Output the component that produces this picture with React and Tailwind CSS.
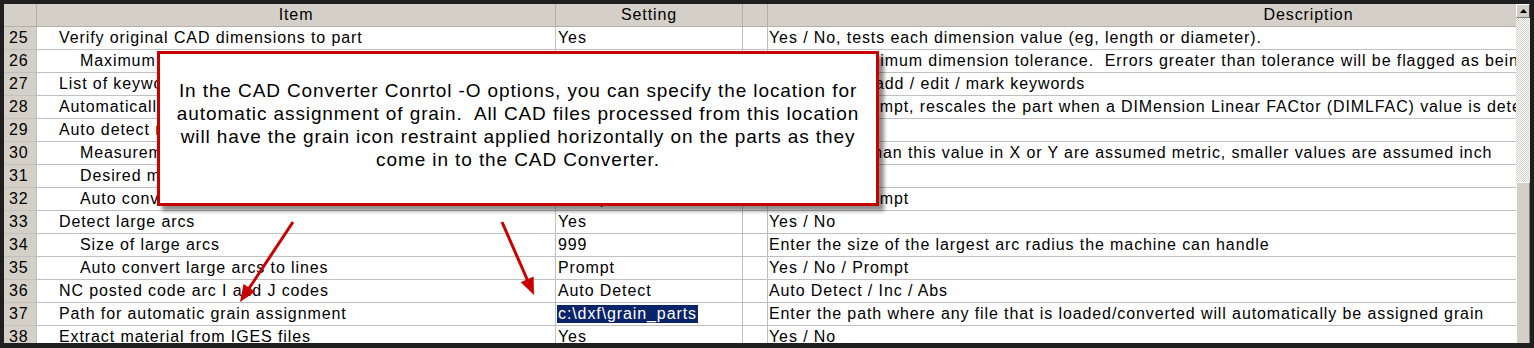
import React from "react";

const rows = [
  { n: 25, lvl: 1, item: "Verify original CAD dimensions to part", set: "Yes", desc: "Yes / No, tests each dimension value (eg, length or diameter)." },
  { n: 26, lvl: 2, item: "Maximum dimension tolerance", set: "0.001", desc: "Enter the maximum dimension tolerance.  Errors greater than tolerance will be flagged as being incorrect" },
  { n: 27, lvl: 1, item: "List of keywords", set: "", desc: "Click here to add / edit / mark keywords" },
  { n: 28, lvl: 1, item: "Automatically scale by DIMLFAC", set: "Prompt", desc: "Yes / No / Prompt, rescales the part when a DIMension Linear FACtor (DIMLFAC) value is detected" },
  { n: 29, lvl: 1, item: "Auto detect metric units", set: "Yes", desc: "Yes / No" },
  { n: 30, lvl: 2, item: "Measurement threshold", set: "100", desc: "Parts larger than this value in X or Y are assumed metric, smaller values are assumed inch" },
  { n: 31, lvl: 2, item: "Desired measurement units", set: "Inch", desc: "Inch / Metric" },
  { n: 32, lvl: 2, item: "Auto convert to desired units", set: "Prompt", desc: "Yes / No / Prompt" },
  { n: 33, lvl: 1, item: "Detect large arcs", set: "Yes", desc: "Yes / No" },
  { n: 34, lvl: 2, item: "Size of large arcs", set: "999", desc: "Enter the size of the largest arc radius the machine can handle" },
  { n: 35, lvl: 2, item: "Auto convert large arcs to lines", set: "Prompt", desc: "Yes / No / Prompt" },
  { n: 36, lvl: 1, item: "NC posted code arc I and J codes", set: "Auto Detect", desc: "Auto Detect / Inc / Abs" },
  { n: 37, lvl: 1, item: "Path for automatic grain assignment", set: "c:\\dxf\\grain_parts", desc: "Enter the path where any file that is loaded/converted will automatically be assigned grain", selected: true },
  { n: 38, lvl: 1, item: "Extract material from IGES files", set: "Yes", desc: "Yes / No" },
];

const cell = "h-[23px] border-r border-b border-[#c0c0c0] flex items-center whitespace-pre overflow-hidden";
const head = "h-[23px] border-r border-b border-[#b4b0a8] bg-[#d4d0c8] flex items-center justify-center whitespace-pre";

function arrowHead(x1, y1, x2, y2, len = 17, half = 7) {
  const dx = x2 - x1;
  const dy = y2 - y1;
  const d = Math.hypot(dx, dy);
  const ux = dx / d;
  const uy = dy / d;
  const bx = x2 - ux * len;
  const by = y2 - uy * len;
  return `${x2},${y2} ${bx - uy * half},${by + ux * half} ${bx + uy * half},${by - ux * half}`;
}

function Arrow({ x1, y1, x2, y2 }) {
  const d = Math.hypot(x2 - x1, y2 - y1);
  const ex = x2 - ((x2 - x1) / d) * 12;
  const ey = y2 - ((y2 - y1) / d) * 12;
  return (
    <g>
      <line x1={x1} y1={y1} x2={ex} y2={ey} stroke="#c80000" strokeWidth="3" />
      <polygon points={arrowHead(x1, y1, x2, y2)} fill="#c80000" />
    </g>
  );
}

export default function App() {
  return (
    <div className="relative w-[1534px] h-[348px] bg-[#1f1f1f] pt-[4px] pl-[4px] pr-[4px] pb-[5px] flex overflow-hidden font-['Liberation_Sans',Arial,sans-serif] text-[16px] tracking-[0.9px] text-black">
      <div className="flex-1 bg-white overflow-hidden">
        <div className="grid grid-cols-[33px_519px_187px_25px_1082px] w-max">
          <div className={head}></div>
          <div className={head}>Item</div>
          <div className={head}>Setting</div>
          <div className={head}></div>
          <div className={head}>Description</div>

          {rows.map((r) => (
            <React.Fragment key={r.n}>
              <div className={`${cell} bg-[#d4d0c8] pl-[5px]`}>{r.n}</div>
              <div className={`${cell} ${r.lvl === 1 ? "pl-[22px]" : "pl-[43px]"}`}>{r.item}</div>
              <div className={`${cell} pl-[1px]`}>
                {r.selected ? (
                  <span className="bg-[#0a246a] text-white px-[1px] leading-[18px]">{r.set}</span>
                ) : (
                  <span className="px-[1px]">{r.set}</span>
                )}
              </div>
              <div className={cell}></div>
              <div className={`${cell} pl-[1px]`}>{r.desc}</div>
            </React.Fragment>
          ))}
        </div>
      </div>

      {/* scrollbar */}
      <div className="w-[14px] flex flex-col">
        <div className="h-[14px] bg-[#d4d0c8] border-t border-l border-t-white border-l-white border-b border-r border-b-[#808080] border-r-[#404040] flex items-center justify-center">
          <svg width="7" height="4" viewBox="0 0 7 4">
            <polygon points="3.5,0 7,4 0,4" fill="#000" />
          </svg>
        </div>
        <div className="h-[164px] bg-[repeating-conic-gradient(#ffffff_0_25%,#d4d0c8_0_50%)] bg-[length:2px_2px]"></div>
        <div className="flex-1 bg-[#d4d0c8] border-t border-l border-t-white border-l-white border-r border-r-[#808080]"></div>
      </div>

      {/* callout */}
      <div className="absolute left-[157px] top-[51px] w-[722px] h-[155px] bg-white border-[3px] border-[#c80000] shadow-[5px_5px_4px_rgba(0,0,0,0.45)] pt-[25px] text-center text-[19px] leading-[23px] tracking-[0.9px]">
        In the CAD Converter Conrtol -O options, you can specify the location for
        <br />
        automatic assignment of grain.{"\u00a0 "}All CAD files processed from this location
        <br />
        will have the grain icon restraint applied horizontally on the parts as they
        <br />
        come in to the CAD Converter.
      </div>

      <svg className="absolute inset-0 pointer-events-none" width="1534" height="348">
        <Arrow x1={293} y1={222} x2={240} y2={302} />
        <Arrow x1={502} y1={222} x2={534} y2={295} />
      </svg>
    </div>
  );
}
